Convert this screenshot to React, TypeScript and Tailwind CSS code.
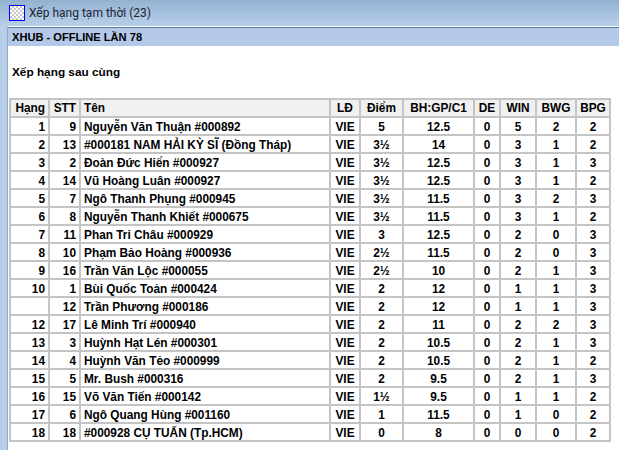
const headers = ['Hạng', 'STT', 'Tên', 'LĐ', 'Điểm', 'BH:GP/C1', 'DE', 'WIN', 'BWG', 'BPG'];

const rows = [
  ['1', '9', 'Nguyễn Văn Thuận #000892', 'VIE', '5', '12.5', '0', '5', '2', '2'],
  ['2', '13', '#000181 NAM HẢI KỲ SĨ (Đồng Tháp)', 'VIE', '3½', '14', '0', '3', '1', '2'],
  ['3', '2', 'Đoàn Đức Hiển #000927', 'VIE', '3½', '12.5', '0', '3', '1', '3'],
  ['4', '14', 'Vũ Hoàng Luân #000927', 'VIE', '3½', '12.5', '0', '3', '1', '2'],
  ['5', '7', 'Ngô Thanh Phụng #000945', 'VIE', '3½', '11.5', '0', '3', '2', '3'],
  ['6', '8', 'Nguyễn Thanh Khiết #000675', 'VIE', '3½', '11.5', '0', '3', '1', '2'],
  ['7', '11', 'Phan Tri Châu #000929', 'VIE', '3', '12.5', '0', '2', '0', '3'],
  ['8', '10', 'Phạm Bảo Hoàng #000936', 'VIE', '2½', '11.5', '0', '2', '0', '3'],
  ['9', '16', 'Trần Văn Lộc #000055', 'VIE', '2½', '10', '0', '2', '1', '3'],
  ['10', '1', 'Bùi Quốc Toản #000424', 'VIE', '2', '12', '0', '1', '1', '3'],
  ['', '12', 'Trần Phương #000186', 'VIE', '2', '12', '0', '1', '1', '3'],
  ['12', '17', 'Lê Minh Trí #000940', 'VIE', '2', '11', '0', '2', '2', '3'],
  ['13', '3', 'Huỳnh Hạt Lén #000301', 'VIE', '2', '10.5', '0', '2', '1', '3'],
  ['14', '4', 'Huỳnh Văn Tẻo #000999', 'VIE', '2', '10.5', '0', '2', '1', '2'],
  ['15', '5', 'Mr. Bush #000316', 'VIE', '2', '9.5', '0', '2', '1', '3'],
  ['16', '15', 'Võ Văn Tiến #000142', 'VIE', '1½', '9.5', '0', '1', '1', '2'],
  ['17', '6', 'Ngô Quang Hùng #001160', 'VIE', '1', '11.5', '0', '1', '0', '2'],
  ['18', '18', '#000928 CỤ TUẤN (Tp.HCM)', 'VIE', '0', '8', '0', '0', '0', '2'],
];

const colWidths = [39, 31, 250, 30, 43, 71, 26, 36, 40, 34];

function align(i: number) {
  if (i < 2) return 'text-right pr-[3px]';
  if (i === 2) return 'text-left pl-[3px]';
  return 'text-center';
}

export default function App() {
  return (
    <div className="w-[619px] h-[450px] overflow-hidden flex flex-col bg-[#b9cfe9] font-['Liberation_Sans',Arial,sans-serif]">
      <div className="h-[26px] shrink-0 flex items-center pl-[9px] gap-[4px] bg-gradient-to-b from-[#94b1d1] to-[#b8d0ea]">
        <div className="w-[16px] h-[16px] border border-[#0000ff] bg-[repeating-conic-gradient(#c8c8c8_0%_25%,#ffffff_0%_50%)] bg-[length:4px_4px]" />
        <span className="text-[12px] text-[#1c2530] font-['Roboto',sans-serif]">Xếp hạng tạm thời (23)</span>
      </div>
      <div className="flex-1 ml-[7px] bg-white border-t border-t-white border-l border-l-[#8fa9c6]">
        <div className="h-[19px] flex items-center pl-[4px] bg-[#b4c9e8] border-t border-t-[#5d7a9e] text-[11.1px] font-bold text-black">
          XHUB - OFFLINE LẦN 78
        </div>
        <div className="h-[52px] pt-[19px] pl-[4px] text-[11.8px] leading-[15px] font-bold text-black">Xếp hạng sau cùng</div>
        <table className="ml-[1px] border-collapse table-fixed w-[600px] text-[11.85px] font-bold text-black">
          <colgroup>
            {colWidths.map((w, i) => (
              <col key={i} style={{ width: w }} />
            ))}
          </colgroup>
          <thead>
            <tr className="h-[18px] bg-[#f0f0f0]">
              {headers.map((h, i) => (
                <th key={h} className={`border-2 border-[#c4c4c4] p-0 pt-[1px] font-bold leading-none ${align(i)}`}>
                  {h}
                </th>
              ))}
            </tr>
          </thead>
          <tbody>
            {rows.map((r, idx) => (
              <tr key={idx} className="h-[18px]">
                {r.map((c, i) => (
                  <td key={i} className={`border-2 border-[#c4c4c4] p-0 pt-[3px] leading-none whitespace-nowrap ${align(i)}`}>
                    {c}
                  </td>
                ))}
              </tr>
            ))}
          </tbody>
        </table>
      </div>
    </div>
  );
}
